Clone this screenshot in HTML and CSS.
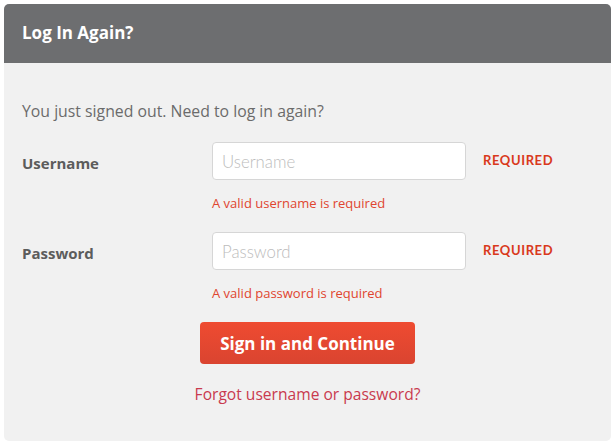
FILE: index.html
```html
<!DOCTYPE html>
<html lang="en">
<head>
    <meta charset="UTF-8">
    <meta name="viewport" content="width=device-width, initial-scale=1.0">
    <title>Log In Again?</title>
    <link rel="stylesheet" href="styles.css">
</head>
<body>
    <div class="panel">
        <div class="panel-header">
            <h1>Log In Again?</h1>
        </div>
        <div class="panel-body">
            <p class="intro">You just signed out. Need to log in again?</p>
            <form class="login-form" onsubmit="return false">
                <div class="form-row">
                    <label for="username">Username</label>
                    <input type="text" id="username" placeholder="Username">
                    <span class="required">REQUIRED</span>
                </div>
                <p class="error">A valid username is required</p>
                <div class="form-row">
                    <label for="password">Password</label>
                    <input type="password" id="password" placeholder="Password">
                    <span class="required">REQUIRED</span>
                </div>
                <p class="error">A valid password is required</p>
                <div class="actions">
                    <button type="submit">Sign in and Continue</button>
                    <a href="#" class="forgot">Forgot username or password?</a>
                </div>
            </form>
        </div>
    </div>
</body>
</html>
```

FILE: styles.css
```css
* { margin: 0; padding: 0; box-sizing: border-box; font-family: "Open Sans", Lato, sans-serif; }
body { background: #fff; padding: 4px; }
.panel { width: 607px; height: 437px; background: #f1f1f1; border-radius: 5px; overflow: hidden; }

/* Header */
.panel-header { height: 59px; background: #6d6e70; display: flex; align-items: center; padding: 0 18px; }
.panel-header h1 { color: #fff; font-size: 17px; font-weight: 700; margin-top: -2px; }

/* Body */
.panel-body { padding: 38px 18px 0; }
.intro { color: #6b6b6b; font-size: 15.8px; line-height: 20px; font-weight: 400; }

.login-form { margin-top: 21px; }
.form-row { display: flex; align-items: center; height: 38px; }
.form-row label { width: 190px; color: #5c5c5c; font-size: 15px; font-weight: 700; padding-top: 4px; }
.form-row input { width: 254px; height: 38px; border: 1px solid #d6d6d6; border-radius: 4px; background: #fff; padding: 0 9px; font-size: 16.8px; color: #444; outline: none; font-family: Lato, sans-serif; }
.form-row input::placeholder { color: #bcbcbc; font-weight: 300; }
.required { margin-left: 17px; color: #d9391c; font-size: 13px; font-weight: 700; letter-spacing: 0.6px; margin-top: -2px; font-family: Lato, sans-serif; }

.error { margin: 15px 0 0 190px; color: #e0452f; font-size: 13px; line-height: 16px; height: 37px; }
.error + .form-row + .error { height: 37px; }

/* Buttons */
.actions { display: flex; flex-direction: column; align-items: center; }
button { width: 215px; height: 42px; border: none; border-radius: 4px; background: linear-gradient(#ef4b31, #da4430); color: #fff; font-size: 17px; font-weight: 700; cursor: pointer; }
button:hover { opacity: 0.9; }
.forgot { margin-top: 19px; color: #c93a4e; font-size: 15.6px; text-decoration: none; }
```
